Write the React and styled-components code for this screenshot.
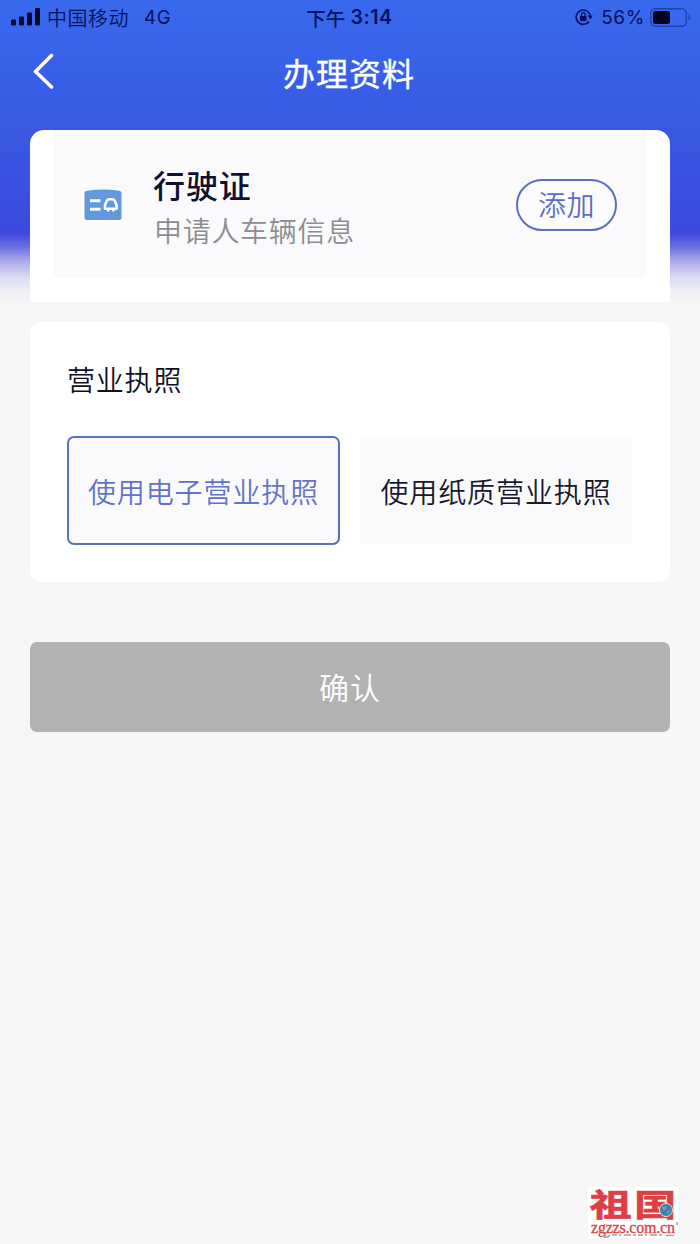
import React, { useState } from 'react';
import styled, { createGlobalStyle } from 'styled-components';

const GlobalStyle = createGlobalStyle`
  * {
    box-sizing: border-box;
  }

  body {
    margin: 0;
    background: #f6f6f6;
    font-family: Inter, 'Noto Sans CJK SC', sans-serif;
  }

  button {
    margin: 0;
    padding: 0;
    font-family: inherit;
  }

  svg {
    display: block;
  }
`;

const Page = styled.div`
  position: relative;
  width: 700px;
  height: 1244px;
  overflow: hidden;
  background: linear-gradient(
    to bottom,
    #396aee 0px,
    #385fe8 75px,
    #3856e2 150px,
    #3a4cdf 218px,
    #4148dc 234px,
    #6d70e1 247px,
    #adadec 262px,
    #dadaf1 277px,
    #f1f1f5 292px,
    #f6f6f6 304px
  );
`;

const StatusBar = styled.div`
  display: grid;
  grid-template-columns: 1fr auto 1fr;
  align-items: center;
  height: 36px;
  padding: 0 9px 2px 11px;
  font-size: 19px;
  color: #07105c;
`;

const StatusGroup = styled.div`
  display: flex;
  align-items: center;
  justify-content: ${(props) => (props.$end ? 'flex-end' : 'flex-start')};
`;

const Carrier = styled.span`
  margin: 0 15px 0 6px;
  font-size: 20px;
  font-weight: 350;
  letter-spacing: 0.5px;
`;

const Network = styled.span`
  font-size: 18.5px;
  letter-spacing: 0.9px;
`;

const Time = styled.span`
  display: flex;
  align-items: center;
  margin-left: -3px;
  font-weight: 600;
  font-size: 19.5px;
  letter-spacing: 0.6px;

  span {
    font-weight: 500;
    font-size: 19.5px;
    letter-spacing: 0;
    margin-right: 5px;
  }
`;

const Percent = styled.span`
  margin: 0 5px 0 8px;
  font-size: 19px;
  letter-spacing: 0.6px;
`;

const NavBar = styled.header`
  display: grid;
  grid-template-columns: 60px 1fr 60px;
  align-items: center;
  height: 94px;
  padding: 0 0 17px;
`;

const BackButton = styled.button`
  display: flex;
  align-items: center;
  height: 44px;
  padding-left: 32px;
  margin-top: -7px;
  border: 0;
  background: none;
`;

const Title = styled.h1`
  margin: 0 2px 0 0;
  text-align: center;
  font-size: 32px;
  line-height: 44px;
  font-weight: 400;
  letter-spacing: 1px;
  color: #fff;
  -webkit-text-stroke: 0.35px #fff;
`;

const Content = styled.main`
  display: flex;
  flex-direction: column;
  padding: 0 30px;
`;

const DocumentCard = styled.section`
  height: 172px;
  padding: 0 23px 24px;
  border-radius: 14px 14px 0 0;
  background: #fff;
`;

const DocumentRow = styled.div`
  display: flex;
  align-items: center;
  height: 148px;
  padding: 1px 30px 0 31px;
  border-radius: 0 0 6px 6px;
  background: #fafafc;
`;

const DocumentText = styled.div`
  flex: 1;
  margin: 9px 0 0 31px;
`;

const DocumentName = styled.h2`
  margin: 0;
  font-size: 32px;
  line-height: 44px;
  font-weight: 500;
  letter-spacing: 0.9px;
  color: #10102c;
`;

const DocumentHint = styled.p`
  margin: 1px 0 0 1px;
  font-size: 28px;
  line-height: 44px;
  font-weight: 350;
  letter-spacing: 0.7px;
  color: #8c8c91;
`;

const AddButton = styled.button`
  width: 101px;
  height: 52px;
  padding-top: 2px;
  border: 2px solid #5c70ba;
  border-radius: 26px;
  background: #fbfbfd;
  font-size: 28px;
  line-height: 46px;
  font-weight: 350;
  letter-spacing: 0.6px;
  color: #5b6cc4;
`;

const LicenseCard = styled.section`
  height: 260px;
  margin-top: 20px;
  padding: 38px 37px 0;
  border-radius: 12px;
  background: #fff;
`;

const SectionTitle = styled.h3`
  margin: 0;
  font-size: 28px;
  line-height: 42px;
  font-weight: 350;
  letter-spacing: 0.8px;
  color: #10101f;
`;

const Options = styled.div`
  display: flex;
  gap: 20px;
  margin-top: 34px;
`;

const Option = styled.button`
  width: ${(props) => (props.$active ? '273px' : '272px')};
  height: 109px;
  border: 2px solid ${(props) => (props.$active ? '#5a71bb' : '#fff')};
  border-width: ${(props) => (props.$active ? '2px' : '1px 0')};
  border-radius: ${(props) => (props.$active ? '7px' : '2px')};
  background: #fafafc;
  font-size: 28px;
  font-weight: 350;
  letter-spacing: 0.9px;
  white-space: nowrap;
  color: ${(props) => (props.$active ? '#6073c8' : '#18182f')};
`;

const ConfirmButton = styled.button`
  height: 90px;
  margin-top: 60px;
  padding: 0 0 3px;
  border: 0;
  border-radius: 7px;
  background: #b2b2b2;
  font-size: 30px;
  font-weight: 350;
  letter-spacing: 1px;
  color: #fff;
`;

const Watermark = styled.div`
  position: absolute;
  right: 22px;
  bottom: 6px;
  width: 90px;
  height: 51px;
  background: #fff;
  color: #dc4046;
`;

const WatermarkName = styled.div`
  display: flex;
  justify-content: center;
  gap: 2px;
  height: 33px;
  font-size: 31px;
  line-height: 35px;
  font-weight: 700;
  white-space: nowrap;
  transform: scaleX(1.35);
  -webkit-text-stroke: 0.7px currentColor;
`;

const WatermarkUrl = styled.div`
  height: 17px;
  padding-left: 3px;
  font-family: 'Liberation Serif', serif;
  font-size: 16px;
  line-height: 15px;
  letter-spacing: -0.2px;
  -webkit-text-stroke: 0.3px currentColor;
`;

const Globe = styled.svg`
  position: absolute;
  top: 16px;
  right: 5px;
`;

const Scribble = styled.svg`
  position: absolute;
  left: 12px;
  bottom: -2px;
`;

const SignalIcon = () => (
  <svg width="30" height="18" viewBox="0 0 30 18" fill="#020631">
    <rect x="0" y="11.5" width="5" height="6" rx="1.3" />
    <rect x="8" y="8.5" width="5" height="9" rx="1.3" />
    <rect x="16" y="4.5" width="5" height="13" rx="1.3" />
    <rect x="24" y="0" width="5" height="17.5" rx="1.3" />
  </svg>
);

const RotationLockIcon = () => (
  <svg width="18" height="18" viewBox="0 0 18 18" fill="none" stroke="#07105c">
    <path d="M14.1 13.5A7.2 7.2 0 1 1 15.3 7.4" strokeWidth="1.6" />
    <path d="M12.6 7.4h5.2L15.4 11.4z" fill="#07105c" stroke="none" />
    <rect x="5" y="7.9" width="6.6" height="5" rx="0.8" fill="#07105c" stroke="none" />
    <path d="M6.5 8.5V6.5a1.8 1.8 0 0 1 3.6 0v2" strokeWidth="1.3" />
  </svg>
);

const BatteryIcon = () => (
  <svg width="41" height="19" viewBox="0 0 41 19">
    <rect x="0.8" y="0.8" width="35.5" height="17.4" rx="4.5" fill="none" stroke="#2140a6" strokeWidth="1.4" />
    <rect x="3" y="3" width="17" height="13" rx="2.5" fill="#020420" />
    <path d="M38.5 6.5c2.3 1 2.3 5 0 6z" fill="#2140a6" />
  </svg>
);

const BackIcon = () => (
  <svg width="24" height="36" viewBox="0 0 24 36" fill="none">
    <path d="M19.5 2.5 3.5 18.5 19.5 34" stroke="#fff" strokeWidth="3.6" strokeLinecap="round" strokeLinejoin="round" />
  </svg>
);

const LicenseIcon = () => (
  <svg width="38" height="32" viewBox="0 0 38 32" fill="none">
    <path d="M3 1.7Q19 -.6 35 1.7Q37.5 2 37.5 4V28.5Q37.5 31 35 31H3Q.5 31 .5 28.5V4Q.5 2 3 1.7z" fill="#6298de" />
    <path d="M6 11.8h10.5M6 20.2h10.5" stroke="#fff" strokeWidth="3" />
    <path
      d="M21 19.7v-3.7l2-4.5q.6-1.3 2-1.3h3.6q1.4 0 2 1.3l2 4.5v3.7z"
      stroke="#fff"
      strokeWidth="2.6"
      strokeLinejoin="round"
    />
    <path d="M24.2 20v2.6M29.4 20v2.6" stroke="#fff" strokeWidth="2.6" />
  </svg>
);

const options = [
  { id: 'electronic', label: '使用电子营业执照' },
  { id: 'paper', label: '使用纸质营业执照' },
];

const App = () => {
  const [selected, setSelected] = useState('electronic');

  return (
    <Page>
      <GlobalStyle />
      <StatusBar>
        <StatusGroup>
          <SignalIcon />
          <Carrier>中国移动</Carrier>
          <Network>4G</Network>
        </StatusGroup>
        <Time>
          <span>下午</span>
          3:14
        </Time>
        <StatusGroup $end>
          <RotationLockIcon />
          <Percent>56%</Percent>
          <BatteryIcon />
        </StatusGroup>
      </StatusBar>
      <NavBar>
        <BackButton aria-label="返回">
          <BackIcon />
        </BackButton>
        <Title>办理资料</Title>
      </NavBar>
      <Content>
        <DocumentCard>
          <DocumentRow>
            <LicenseIcon />
            <DocumentText>
              <DocumentName>行驶证</DocumentName>
              <DocumentHint>申请人车辆信息</DocumentHint>
            </DocumentText>
            <AddButton>添加</AddButton>
          </DocumentRow>
        </DocumentCard>
        <LicenseCard>
          <SectionTitle>营业执照</SectionTitle>
          <Options>
            {options.map(({ id, label }) => (
              <Option key={id} $active={selected === id} onClick={() => setSelected(id)}>
                {label}
              </Option>
            ))}
          </Options>
        </LicenseCard>
        <ConfirmButton>确认</ConfirmButton>
      </Content>
      <Watermark>
        <WatermarkName>
          <span>祖</span>
          <span>国</span>
        </WatermarkName>
        <WatermarkUrl>zgzzs.com.cn</WatermarkUrl>
        <Globe width="14" height="14" viewBox="0 0 14 14">
          <circle cx="7" cy="7" r="6.5" fill="#3d7fae" stroke="#d5e5ed" />
          <path d="M3 4.5 6 3l2 1.5L6.5 7 4 7.5zM8 8l3-1-1 3.5-2 .5z" fill="#8b9a8c" />
        </Globe>
        <Scribble width="80" height="22" viewBox="0 0 80 22" fill="none" stroke="#a3a3a8">
          <path d="M2 18q5 3 8-1" strokeWidth="1.5" />
          <path d="M12 17h52" strokeWidth="1.5" strokeDasharray="5 2 2 3 7 2 3 2" />
          <path d="M66 17.5h8M77 4v3" strokeWidth="1.5" />
        </Scribble>
      </Watermark>
    </Page>
  );
};

export default App;
